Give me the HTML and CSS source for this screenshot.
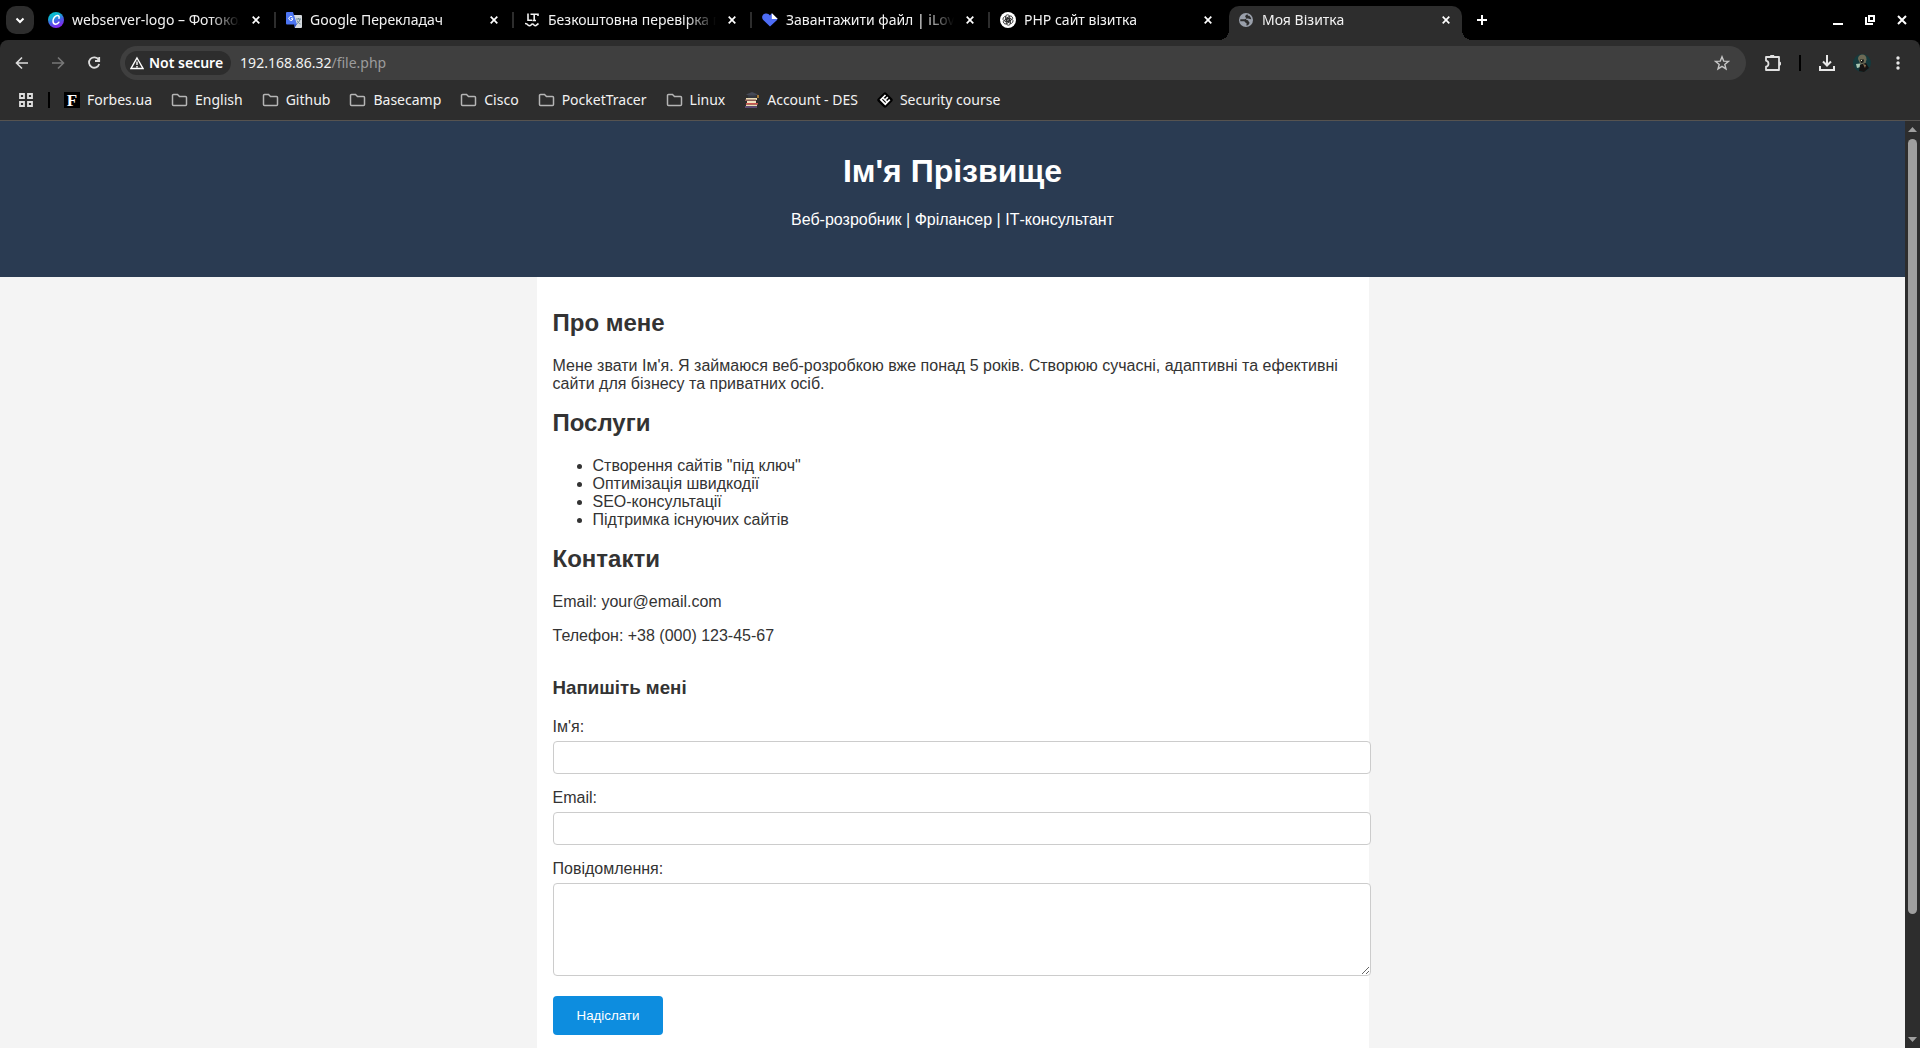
FILE: index.html
```html
<!DOCTYPE html>
<html lang="uk">
<head>
<meta charset="utf-8">
<title>Моя Візитка</title>
<link rel="stylesheet" href="styles.css">
</head>
<body>
<div class="browser">
  <div class="tabstrip">
    <button class="tab-search" aria-label="Search tabs"><svg width="12" height="12" viewBox="0 0 12 12"><path d="M2.500 4.500 6 8l3.500-3.500" fill="none" stroke="#fff" stroke-width="2"/></svg></button>
    <div class="tabs">
      <div class="tab">
        <svg class="favicon" width="16" height="16" viewBox="0 0 16 16"><defs><linearGradient id="canva" x1="0.200" y1="0" x2="0.600" y2="1"><stop offset="0" stop-color="#00c4cc"/><stop offset=".3" stop-color="#12b0d4"/><stop offset=".6" stop-color="#4a5ce6"/><stop offset="1" stop-color="#8a1ff0"/></linearGradient></defs><circle cx="8" cy="8" r="8" fill="url(#canva)"/><path d="M11 6.200c.6-1.700-.3-2.700-1.700-2.600-2.500.2-4.300 3-4.300 5.400 0 2 1 3.200 2.700 3.200 1.400 0 2.500-.8 3.200-2" fill="none" stroke="#fff" stroke-width="1.500" stroke-linecap="round"/></svg>
        <span class="tab-title">webserver-logo – Фотоколаж</span>
        <button class="tab-close" aria-label="Close"><svg width="8" height="8" viewBox="0 0 8 8"><path d="M.7.7l6.600 6.600M7.300.7.7 7.300"/></svg></button>
      </div>
      <div class="tab">
        <svg class="favicon" width="16" height="16" viewBox="0 0 16 16"><path d="M7 3h8a1 1 0 0 1 1 1v11a1 1 0 0 1-1 1H9z" fill="#d5d9de"/><path d="M8 12h3l-2.500 4z" fill="#2a49b8"/><path d="M10 7h5M12.500 6v1M14 7c-.5 3-2 4-3.500 5M11 8.500c1 2 2 3 3.500 3.500" fill="none" stroke="#6a8a96"/><path d="M1 0h6l4 12.500H1a1 1 0 0 1-1-1V1a1 1 0 0 1 1-1z" fill="#4c75f2"/><path d="M6.500 5.200a2 2 0 1 0 .4 1.500H5" fill="none" stroke="#fff"/></svg>
        <span class="tab-title">Google Перекладач</span>
        <button class="tab-close" aria-label="Close"><svg width="8" height="8" viewBox="0 0 8 8"><path d="M.7.7l6.600 6.600M7.300.7.7 7.300"/></svg></button>
      </div>
      <div class="tab">
        <svg class="favicon" width="16" height="16" viewBox="0 0 16 16" fill="none" stroke="#f2f2f2" stroke-width="1.600"><path d="M4 1.500v6.700h4M6.500 2.300H14M14 1.500v2.500M10.200 2v6.500M8.500 8.500h3.500"/><path d="M1 11.500q2 0 3 1.500 1.500 1.500 3 0 1.500-2 3 0 1.500 1.500 2.500 0l2-1.500"/></svg>
        <span class="tab-title">Безкоштовна перевірка граматики</span>
        <button class="tab-close" aria-label="Close"><svg width="8" height="8" viewBox="0 0 8 8"><path d="M.7.7l6.600 6.600M7.300.7.7 7.300"/></svg></button>
      </div>
      <div class="tab">
        <svg class="favicon" width="16" height="16" viewBox="0 0 16 16"><path d="M8 14.500 1 7.800C-.8 5.500.3 2 3.500 1.500 5.500 1.200 7 2 8 3.500L9.500 1.500 15.500 7 14.800 8.200z" fill="#4d6cf5"/><path d="M9.800 1v6h6z" fill="#fff"/></svg>
        <span class="tab-title">Завантажити файл | iLovePDF</span>
        <button class="tab-close" aria-label="Close"><svg width="8" height="8" viewBox="0 0 8 8"><path d="M.7.7l6.600 6.600M7.300.7.7 7.300"/></svg></button>
      </div>
      <div class="tab">
        <svg class="favicon" width="16" height="16" viewBox="0 0 16 16"><circle cx="8" cy="8" r="8" fill="#fff"/><g fill="none" stroke="#222" stroke-width=".8"><rect id="petal" x="5.500" y="2.800" width="4.200" height="6.500" rx="2.100"/><use href="#petal" transform="rotate(60 8 8)"/><use href="#petal" transform="rotate(120 8 8)"/><use href="#petal" transform="rotate(180 8 8)"/><use href="#petal" transform="rotate(240 8 8)"/><use href="#petal" transform="rotate(300 8 8)"/></g></svg>
        <span class="tab-title">PHP сайт візитка</span>
        <button class="tab-close" aria-label="Close"><svg width="8" height="8" viewBox="0 0 8 8"><path d="M.7.7l6.600 6.600M7.300.7.7 7.300"/></svg></button>
      </div>
      <div class="tab tab-active">
        <svg class="favicon" width="16" height="16" viewBox="0 0 16 16"><circle cx="8" cy="8" r="7" fill="#9aa0ab"/><path d="M9.500 2.200C8 2.800 6.500 4 7.500 5.200c1.300.8.600 1.800-1 2.100H2.300v1.900h3.500c1.500 0 1.200 1.800 2.700 1.800v2.800c2-.5 3-2 3-3.300-1.200-.6-.8-2.200-2.500-2.400-1.300-.2-1.200-1.300-.2-1.600 1.500-.2 2.500.8 4.500.7-.3-1.500-1-2.700-2-3.500-1 .3-1.500-.2-1.800-1.500z" fill="#2d2d2d"/></svg>
        <span class="tab-title">Моя Візитка</span>
        <button class="tab-close" aria-label="Close"><svg width="8" height="8" viewBox="0 0 8 8"><path d="M.7.7l6.600 6.600M7.300.7.7 7.300"/></svg></button>
      </div>
    </div>
    <button class="new-tab" aria-label="New tab"><svg width="12" height="12" viewBox="0 0 12 12"><path d="M6 1v10M1 6h10" stroke="#fff" stroke-width="2"/></svg></button>
    <div class="window-buttons">
      <button aria-label="Minimize"><svg width="10" height="10" viewBox="0 0 10 10"><path d="M0 9h10" stroke="#fff" stroke-width="2"/></svg></button>
      <button aria-label="Restore"><svg width="10" height="10" viewBox="0 0 10 10" fill="none" stroke="#fff" stroke-width="2"><path d="M4 1h5v5H4zM1 2v7h7"/></svg></button>
      <button aria-label="Close window"><svg width="10" height="10" viewBox="0 0 10 10"><path d="M1 1l8 8M9 1 1 9" stroke="#fff" stroke-width="2"/></svg></button>
    </div>
  </div>

  <div class="toolbar">
    <div class="history">
      <button aria-label="Back"><svg width="14" height="14" viewBox="0 0 14 14" fill="none" stroke="#dcdcdc" stroke-width="1.600"><path d="M7 1.500 1.500 7 7 12.500M2 7h11"/></svg></button>
      <button aria-label="Forward"><svg width="14" height="14" viewBox="0 0 14 14" fill="none" stroke="#777" stroke-width="1.600"><path d="M7 1.500 12.500 7 7 12.500M12 7H1"/></svg></button>
      <button aria-label="Reload"><svg width="14" height="14" viewBox="0 0 14 14" fill="none" stroke="#dcdcdc" stroke-width="1.800"><path d="M11.600 3.700A5.200 5.200 0 1 0 12.200 8M12.200 1v4H8"/></svg></button>
    </div>
    <div class="omnibox">
      <button class="security"><svg width="14" height="14" viewBox="0 0 14 14" fill="none" stroke="#fff" stroke-width="1.400"><path d="M7 2 13 12.500H1zM7 5.500v3.500M7 10v1.500"/></svg>Not secure</button>
      <div class="url">192.168.86.32<span class="url-path">/file.php</span></div>
      <button class="star" aria-label="Bookmark this tab"><svg width="16" height="16" viewBox="0 0 16 16" fill="none" stroke="#c6c6c6" stroke-width="1.400"><path d="M8 1.800l1.700 4.300 4.700.3-3.600 3 1.200 4.500L8 11.400l-4 2.500 1.200-4.500-3.600-3 4.700-.3z"/></svg></button>
    </div>
    <div class="actions">
      <button aria-label="Extensions"><svg width="16" height="16" viewBox="0 0 16 16" fill="none" stroke="#e0e0e0" stroke-width="1.800"><path d="M1 2h13v13H1v-3.300c3.300-.6 3.300-5.400 0-6z" stroke-linejoin="round"/><path d="M5 1.500a2.200 2.200 0 0 1 4.400 0zM14 6.500a2.200 2.200 0 0 1 0 4.400z" fill="#e0e0e0" stroke="none"/></svg></button>
      <span class="divider"></span>
      <button aria-label="Downloads"><svg width="16" height="16" viewBox="0 0 16 16" fill="none" stroke="#e8e8e8" stroke-width="2"><path d="M8 0v10M4 6.500l4 4 4-4M1 11v4h14v-4"/></svg></button>
      <button aria-label="Profile"><svg width="18" height="18" viewBox="0 0 18 18"><circle cx="9" cy="9" r="9" fill="#153a3d"/><path d="M5 5q0-4 4-4.500 4.500 0 4.500 5l-1 4-5 1z" fill="#6c6a55"/><path d="M7 5.500h4l-.5 3-2.500.5z" fill="#171b1a"/><path d="M3 10l4-.5L8 13l-4 1z" fill="#a9c8b4"/><path d="M7 11l6-2 3 5-5 4-5-1z" fill="#171413"/><path d="M10 10l3 1-1 3z" fill="#8c7355"/><path d="M8 6h1v1H8z" fill="#e7e2bd"/></svg></button>
      <button class="menu" aria-label="Menu"><svg width="4" height="14" viewBox="0 0 4 14" fill="#e8e8e8"><circle cx="2" cy="2" r="1.700"/><circle cx="2" cy="7" r="1.700"/><circle cx="2" cy="12" r="1.700"/></svg></button>
    </div>
  </div>

  <nav class="bookmarks">
    <button class="apps" aria-label="Apps"><svg width="14" height="14" viewBox="0 0 14 14" fill="none" stroke="#dedede" stroke-width="1.800"><path d="M1 1h4v4H1zM9 1h4v4H9zM1 9h4v4H1zM9 9h4v4H9z"/></svg></button>
    <span class="divider"></span>
    <a href="#"><span class="forbes">F</span>Forbes.ua</a>
    <a href="#"><svg class="folder" viewBox="0 0 16 16"><path d="M1 12.500v-9a1 1 0 0 1 1-1h4l2 2h6a1 1 0 0 1 1 1v7a1 1 0 0 1-1 1H2a1 1 0 0 1-1-1z"/></svg>English</a>
    <a href="#"><svg class="folder" viewBox="0 0 16 16"><path d="M1 12.500v-9a1 1 0 0 1 1-1h4l2 2h6a1 1 0 0 1 1 1v7a1 1 0 0 1-1 1H2a1 1 0 0 1-1-1z"/></svg>Github</a>
    <a href="#"><svg class="folder" viewBox="0 0 16 16"><path d="M1 12.500v-9a1 1 0 0 1 1-1h4l2 2h6a1 1 0 0 1 1 1v7a1 1 0 0 1-1 1H2a1 1 0 0 1-1-1z"/></svg>Basecamp</a>
    <a href="#"><svg class="folder" viewBox="0 0 16 16"><path d="M1 12.500v-9a1 1 0 0 1 1-1h4l2 2h6a1 1 0 0 1 1 1v7a1 1 0 0 1-1 1H2a1 1 0 0 1-1-1z"/></svg>Cisco</a>
    <a href="#"><svg class="folder" viewBox="0 0 16 16"><path d="M1 12.500v-9a1 1 0 0 1 1-1h4l2 2h6a1 1 0 0 1 1 1v7a1 1 0 0 1-1 1H2a1 1 0 0 1-1-1z"/></svg>PocketTracer</a>
    <a href="#"><svg class="folder" viewBox="0 0 16 16"><path d="M1 12.500v-9a1 1 0 0 1 1-1h4l2 2h6a1 1 0 0 1 1 1v7a1 1 0 0 1-1 1H2a1 1 0 0 1-1-1z"/></svg>Linux</a>
    <a href="#"><svg width="16" height="16" viewBox="0 0 16 16"><path d="M8 0l6 2.500L8 5 2 2.500z" fill="#454956"/><path d="M4 3.500h8V6H4z" fill="#33363f"/><path d="M14 3v3" stroke="#e8a33a" stroke-width="1.200"/><path d="M2 6h11v2H2zM2 12.500h11V15H2z" fill="#e9dcb5"/><path d="M1 7.500h11v1.500H1z" fill="#8a5a55"/><path d="M1 14h12v2H1z" fill="#5c4a73"/><path d="M3 9h9v2H3z" fill="#f1e3c0"/><path d="M2 11h12v1.600H2z" fill="#c9544f"/></svg>Account - DES</a>
    <a href="#"><svg width="16" height="16" viewBox="0 0 16 16"><rect x="2" y="2" width="12" height="12" rx="2" transform="rotate(45 8 8)" fill="#000"/><path d="M8.500 3 3.800 7.700l4.500 4.500 4.500-4.500M10.800 5.200 8 8M6 6l4 4" fill="none" stroke="#fff" stroke-width="1.700"/></svg>Security course</a>
  </nav>

  <div class="viewport">
    <div class="page">
      <header class="hero">
        <h1>Ім'я Прізвище</h1>
        <p>Веб-розробник | Фрілансер | ІТ-консультант</p>
      </header>
      <main class="card">
        <section>
          <h2>Про мене</h2>
          <p>Мене звати Ім'я. Я займаюся веб-розробкою вже понад 5 років. Створюю сучасні, адаптивні та ефективні сайти для бізнесу та приватних осіб.</p>
        </section>
        <section>
          <h2>Послуги</h2>
          <ul>
            <li>Створення сайтів "під ключ"</li>
            <li>Оптимізація швидкодії</li>
            <li>SEO-консультації</li>
            <li>Підтримка існуючих сайтів</li>
          </ul>
        </section>
        <section>
          <h2>Контакти</h2>
          <p>Email: your@email.com</p>
          <p>Телефон: +38 (000) 123-45-67</p>
        </section>
        <form class="contact">
          <h3>Напишіть мені</h3>
          <label for="name">Ім'я:</label>
          <input id="name" type="text">
          <label for="email">Email:</label>
          <input id="email" type="email">
          <label for="message">Повідомлення:</label>
          <textarea id="message" rows="5"></textarea>
          <button type="submit">Надіслати</button>
        </form>
      </main>
    </div>
    <div class="scrollbar">
      <svg width="9" height="5" viewBox="0 0 9 5"><path d="M4.500 0 9 5H0z"/></svg>
      <div class="track"><div class="thumb"></div></div>
      <svg width="9" height="5" viewBox="0 0 9 5"><path d="M0 0h9L4.500 5z"/></svg>
    </div>
  </div>
</div>
</body>
</html>
```
FILE: styles.css
```css
* {
  box-sizing: border-box;
}

body {
  margin: 0;
  background: #000;
  font-family: "Liberation Sans", Arial, sans-serif;
}

.browser {
  display: flex;
  flex-direction: column;
  height: 100vh;
  overflow: hidden;
}

.tabstrip,
.toolbar,
.bookmarks {
  display: flex;
  flex: none;
  align-items: center;
  color: #f2f2f2;
  font: 14px/20px "Noto Sans", sans-serif;
}

.tabstrip button,
.toolbar button,
.bookmarks button {
  display: flex;
  flex: none;
  align-items: center;
  justify-content: center;
  padding: 0;
  border: 0;
  background: none;
  color: inherit;
  font: inherit;
}

/* Tab strip */
.tabstrip {
  height: 40px;
  padding-left: 6px;
}

.tabstrip .tab-search {
  width: 28px;
  height: 28px;
  border-radius: 10px;
  background: #2d2d2d;
}

.tabs {
  display: flex;
  flex: 0 1 1428px;
  min-width: 0;
  align-self: flex-end;
}

.tab {
  position: relative;
  display: flex;
  flex: 1 1 0;
  min-width: 0;
  height: 34px;
  align-items: center;
  padding: 0 0 6px 14px;
}

.tab + .tab::before {
  content: "";
  position: absolute;
  left: 2px;
  top: 6px;
  width: 2px;
  height: 16px;
  background: #2d2d2d;
}

.favicon {
  flex: none;
  margin-right: 8px;
}

.tab-title {
  flex: 1;
  min-width: 0;
  overflow: hidden;
  white-space: nowrap;
  -webkit-mask-image: linear-gradient(to left, transparent, #000 30px);
  mask-image: linear-gradient(to left, transparent, #000 30px);
}

.tabstrip .tab-close {
  width: 32px;
  height: 20px;
}

.tab-close svg {
  stroke: #fff;
  stroke-width: 1.7;
}

.tab-active {
  isolation: isolate;
}

.tabstrip .tab + .tab-active::before {
  inset: 0 0 0 5px;
  z-index: -1;
  width: auto;
  height: auto;
  border-radius: 10px 10px 0 0;
}

/* Flared feet that join the active tab to the toolbar */
.tab-active::after {
  content: "";
  position: absolute;
  left: -5px;
  right: -10px;
  bottom: 0;
  height: 10px;
  background:
    radial-gradient(circle at 0 0, transparent 10px, #2d2d2d 10px) left / 10px 10px no-repeat,
    radial-gradient(circle at 100% 0, transparent 10px, #2d2d2d 10px) right / 10px 10px no-repeat;
}

.tabstrip .new-tab {
  width: 28px;
  height: 28px;
  margin-left: 6px;
}

.window-buttons {
  display: flex;
  gap: 22px;
  margin-left: auto;
  padding-right: 13px;
}

/* Toolbar */
.toolbar {
  height: 46px;
  gap: 19px;
  padding: 0 13px 0 15px;
  border-radius: 8px 8px 0 0;
  background: #2d2d2d;
}

.history {
  display: flex;
  gap: 22px;
}

.omnibox {
  display: flex;
  flex: 1;
  min-width: 0;
  height: 34px;
  align-items: center;
  padding: 0 16px 0 5px;
  border-radius: 17px;
  background: #3f3f3f;
}

.toolbar .security {
  gap: 5px;
  height: 24px;
  padding: 0 8px 0 5px;
  border-radius: 12px;
  background: #2d2d2d;
  color: #fff;
  font-weight: 600;
}

.url {
  flex: 1;
  padding-left: 9px;
}

.url-path {
  color: #9c9c9c;
}

.actions {
  display: flex;
  align-items: center;
  gap: 18px;
}

.toolbar .menu {
  width: 18px;
}

.divider {
  flex: none;
  width: 2px;
  height: 16px;
  background: #000;
}

/* Bookmarks bar */
.bookmarks {
  height: 35px;
  padding: 0 19px 6px;
  border-bottom: 1px solid #565350;
  background: #2d2d2d;
}

.bookmarks .apps {
  margin-right: 15px;
}

.bookmarks a {
  display: flex;
  align-items: center;
  gap: 7px;
  margin-right: 19px;
  color: #f2f2f2;
  text-decoration: none;
  white-space: nowrap;
}

.bookmarks .divider {
  margin-right: 14px;
}

.forbes {
  width: 16px;
  height: 16px;
  background: #000;
  color: #fff;
  font: bold 17px/17px "Liberation Serif", serif;
  text-align: center;
}

.folder {
  width: 17px;
  height: 16px;
  fill: none;
  stroke: #b5b5b5;
  stroke-width: 1.5;
}

/* Page area */
.viewport {
  display: flex;
  flex: 1;
  min-height: 0;
}

.page {
  flex: 1;
  overflow: hidden;
  background: #f4f4f4;
  color: #333;
}

.hero {
  padding: 32px 16px;
  background: #2a3b52;
  color: #fff;
  text-align: center;
}

.hero h1 {
  margin: 0 0 21px;
}

.hero p {
  margin: 0 0 16px;
}

.card {
  max-width: 832px;
  margin: 0 auto;
  padding: 32px 16px;
  background: #fff;
}

.card h2 {
  margin: 0 0 20px;
}

.card p,
.card ul {
  margin: 0 0 16px;
}

.contact {
  padding-top: 16px;
}

.contact h3 {
  margin: 0 0 19px;
}

.contact label {
  display: block;
  margin-bottom: 5px;
}

.contact input,
.contact textarea {
  display: block;
  box-sizing: content-box;
  width: 100%;
  margin: 0 0 15px;
  padding: 8px;
  border: 1px solid #ccc;
  border-radius: 4px;
}

.contact textarea {
  margin-bottom: 20px;
}

.contact button {
  padding: 12px 24px;
  border: 0;
  border-radius: 4px;
  background: #0d8ddf;
  color: #fff;
}

/* Scrollbar */
.scrollbar {
  display: flex;
  flex: none;
  flex-direction: column;
  align-items: center;
  gap: 7px;
  width: 15px;
  padding: 6px 0;
  background: #2d2d2d;
  fill: #9f9f9f;
}

.track {
  flex: 1;
}

.thumb {
  width: 9px;
  height: 87%;
  border-radius: 5px;
  background: #9f9f9f;
}
```
